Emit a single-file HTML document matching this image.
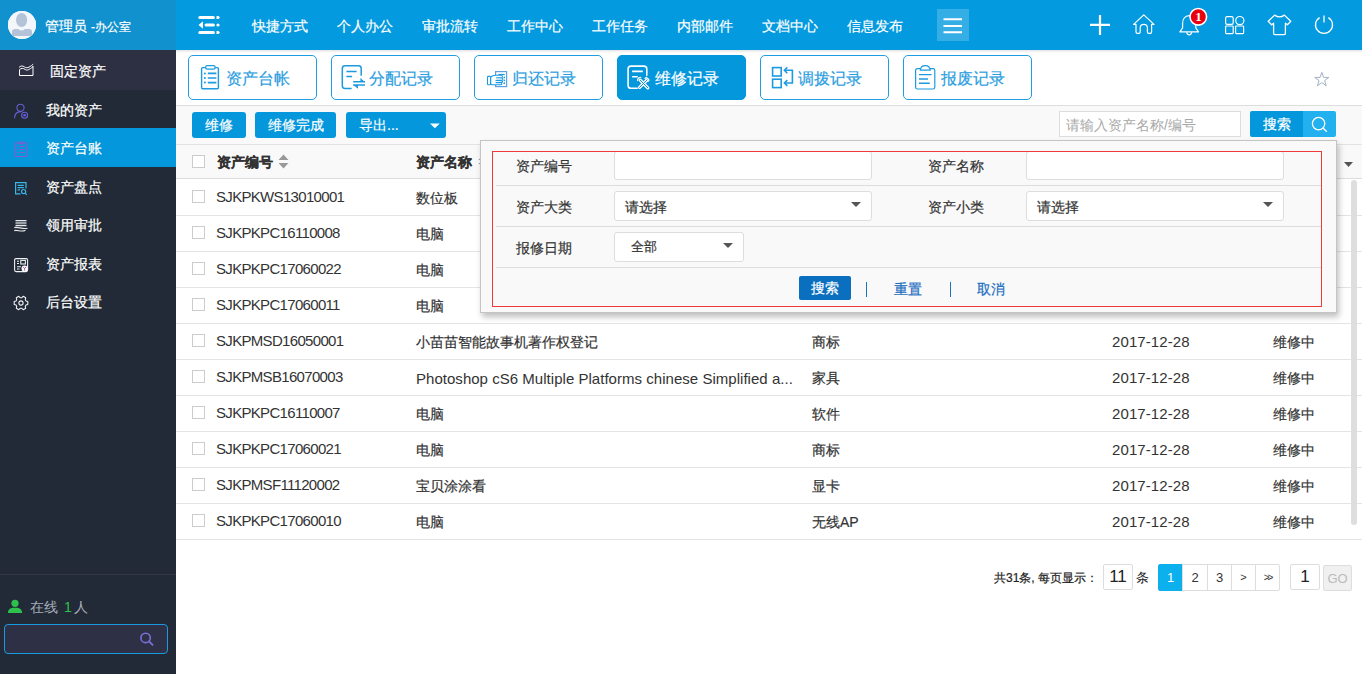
<!DOCTYPE html>
<html><head><meta charset="utf-8">
<style>
*{box-sizing:border-box;margin:0;padding:0}
html,body{width:1362px;height:674px;overflow:hidden;background:#fff;font-family:"Liberation Sans",sans-serif;font-size:14px;color:#333;-webkit-text-stroke:0.2px currentColor}
.nos{-webkit-text-stroke:0}
.a{position:absolute}
#side{left:0;top:0;width:176px;height:674px;background:#212a36}
#side .hd{left:0;top:0;width:176px;height:50px;background:#1191ce}
#side .av{left:8px;top:11px;width:28px;height:28px;border-radius:50%;background:#fff;overflow:hidden}
#side .uname{left:45px;top:17px;color:#fff;font-size:14px;line-height:18px;white-space:nowrap}
#side .fix{left:0;top:50px;width:176px;height:40px;background:#2d2f43}
.mi{left:0;width:176px;height:38px;color:#fff;line-height:38px}
.mi .t{position:absolute;left:46px;top:1px}
.mi.on{background:#0497dc}
#top{left:176px;top:0;width:1186px;height:50px;background:#039ae0;}
.nav{top:17px;color:#fff;font-size:14px;line-height:18px;white-space:nowrap}
#tabs{left:176px;top:50px;width:1186px;height:56px;background:#fff;border-bottom:1px solid #ddd}
.tab{top:55px;width:129px;height:45px;border:1px solid #1e9de0;border-radius:5px;color:#2c9ee0;font-size:16px;background:#fff}
.tab .t{position:absolute;left:37px;top:13px;line-height:20px;white-space:nowrap}
.tab.on{background:#0497dc;color:#fff;border-color:#0497dc}
#tool{left:176px;top:106px;width:1186px;height:38px;background:#f9f9f9}
.btn{height:26px;top:112px;background:#0497dc;color:#fff;border-radius:3px;font-size:14px;line-height:26px;text-align:center}
#thead{left:176px;top:144px;width:1186px;height:35px;background:#f9f9f9;border-top:1px solid #e3e3e3;border-bottom:1px solid #ddd}
.row{left:176px;width:1186px;height:36px;border-bottom:1px solid #e4e4e4;background:#fff}
.c.code{-webkit-text-stroke:0;top:-1px;left:40px;font-size:15px;letter-spacing:-0.68px}.nm{left:240px}.ct{left:636px}.c.dt{-webkit-text-stroke:0;top:0;left:936px;font-size:15px;letter-spacing:0.1px}.st{left:1097px}
.cb{position:absolute;left:16px;top:10px;width:13px;height:13px;border:1px solid #ccc;background:#fff}
.c{position:absolute;top:1px;line-height:35px;white-space:nowrap;color:#333}

.th{font-weight:bold;color:#333;line-height:18px;white-space:nowrap}
.pl{height:1px;background:#ddd}
.plab{color:#333;line-height:18px;white-space:nowrap}
.inp{background:#fff;border:1px solid #ddd;border-radius:3px}
.sel span{position:absolute;left:10px;top:6px;line-height:18px;color:#333;white-space:nowrap}
.sel i{position:absolute;left:236px;top:10px;width:0;height:0;border-left:5px solid transparent;border-right:5px solid transparent;border-top:5px solid #555}
.plk{top:280px;color:#1a6dc0;line-height:18px;white-space:nowrap}
.pbox{-webkit-text-stroke:0;border:1px solid #ddd;border-radius:2px;background:#fff;color:#222;text-align:center;line-height:24px}
.pg{-webkit-text-stroke:0;top:564px;height:27px;border:1px solid #ddd;background:#fff;color:#333;font-size:13px;line-height:25px;text-align:center}
</style></head><body>
<!-- SIDEBAR -->
<div id="side" class="a">
  <div class="hd a"></div>
  <div class="av a"></div>
  <div class="uname a">管理员 <span style="font-size:12px">-办公室</span></div>
  <div class="fix a"></div>
  <div class="a" style="left:50px;top:62px;color:#fff;line-height:18px">固定资产</div>
  <div class="mi a" style="top:90px"><span class="t">我的资产</span></div>
  <div class="mi a on" style="top:128px;height:39px"><span class="t">资产台账</span></div>
  <div class="mi a" style="top:167px"><span class="t">资产盘点</span></div>
  <div class="mi a" style="top:205px"><span class="t">领用审批</span></div>
  <div class="mi a" style="top:244px"><span class="t">资产报表</span></div>
  <div class="mi a" style="top:282px"><span class="t">后台设置</span></div>
</div>
<!-- TOP BAR -->
<div id="top" class="a"></div>
<div class="nav a" style="left:252px">快捷方式</div>
<div class="nav a" style="left:337px">个人办公</div>
<div class="nav a" style="left:422px">审批流转</div>
<div class="nav a" style="left:507px">工作中心</div>
<div class="nav a" style="left:592px">工作任务</div>
<div class="nav a" style="left:677px">内部邮件</div>
<div class="nav a" style="left:762px">文档中心</div>
<div class="nav a" style="left:847px">信息发布</div>
<!-- TABS -->
<div id="tabs" class="a"></div>
<div class="a" style="left:176px;top:50px;width:1186px;height:3px;background:linear-gradient(rgba(0,0,0,0.1),rgba(0,0,0,0))"></div>
<div class="tab a" style="left:188px"><span class="t">资产台帐</span></div>
<div class="tab a" style="left:331px"><span class="t">分配记录</span></div>
<div class="tab a" style="left:474px"><span class="t">归还记录</span></div>
<div class="tab a on" style="left:617px"><span class="t">维修记录</span></div>
<div class="tab a" style="left:760px"><span class="t">调拨记录</span></div>
<div class="tab a" style="left:903px"><span class="t">报废记录</span></div>
<!-- TOOLBAR -->
<div id="tool" class="a"></div>
<div class="btn a" style="left:192px;width:54px">维修</div>
<div class="btn a" style="left:255px;width:81px">维修完成</div>
<div class="btn a" style="left:346px;width:100px;text-align:left;padding-left:13px">导出...</div>
<!-- TABLE -->
<div id="thead" class="a"></div>
<div id="rows">
<div class="row a" style="top:180px"><span class="cb"></span><span class="c code">SJKPKWS13010001</span><span class="c nm">数位板</span></div>
<div class="row a" style="top:216px"><span class="cb"></span><span class="c code">SJKPKPC16110008</span><span class="c nm">电脑</span></div>
<div class="row a" style="top:252px"><span class="cb"></span><span class="c code">SJKPKPC17060022</span><span class="c nm">电脑</span></div>
<div class="row a" style="top:288px"><span class="cb"></span><span class="c code">SJKPKPC17060011</span><span class="c nm">电脑</span></div>
<div class="row a" style="top:324px"><span class="cb"></span><span class="c code">SJKPMSD16050001</span><span class="c nm">小苗苗智能故事机著作权登记</span><span class="c ct">商标</span><span class="c dt">2017-12-28</span><span class="c st">维修中</span></div>
<div class="row a" style="top:360px"><span class="cb"></span><span class="c code">SJKPMSB16070003</span><span class="c nm" style="-webkit-text-stroke:0;font-size:15px;letter-spacing:0.03px">Photoshop cS6 Multiple Platforms chinese Simplified a...</span><span class="c ct">家具</span><span class="c dt">2017-12-28</span><span class="c st">维修中</span></div>
<div class="row a" style="top:396px"><span class="cb"></span><span class="c code">SJKPKPC16110007</span><span class="c nm">电脑</span><span class="c ct">软件</span><span class="c dt">2017-12-28</span><span class="c st">维修中</span></div>
<div class="row a" style="top:432px"><span class="cb"></span><span class="c code">SJKPKPC17060021</span><span class="c nm">电脑</span><span class="c ct">商标</span><span class="c dt">2017-12-28</span><span class="c st">维修中</span></div>
<div class="row a" style="top:468px"><span class="cb"></span><span class="c code">SJKPMSF11120002</span><span class="c nm">宝贝涂涂看</span><span class="c ct">显卡</span><span class="c dt">2017-12-28</span><span class="c st">维修中</span></div>
<div class="row a" style="top:504px"><span class="cb"></span><span class="c code">SJKPKPC17060010</span><span class="c nm">电脑</span><span class="c ct">无线AP</span><span class="c dt">2017-12-28</span><span class="c st">维修中</span></div>
</div>
<!-- THEAD CONTENT -->
<span class="cb a" style="left:192px;top:155px"></span>
<div class="a th" style="left:217px;top:153px">资产编号</div>
<div class="a th" style="left:416px;top:153px">资产名称</div>
<svg class="a" style="left:278px;top:154px" width="11" height="15" viewBox="0 0 11 15"><path d="M5.5 0.5L10.5 6H0.5Z M5.5 14.5L10.5 9H0.5Z" fill="#999"/></svg>
<svg class="a" style="left:478px;top:154px" width="11" height="15" viewBox="0 0 11 15"><path d="M5.5 0.5L10.5 6H0.5Z M5.5 14.5L10.5 9H0.5Z" fill="#999"/></svg>
<svg class="a" style="left:1343.5px;top:162px" width="9" height="5" viewBox="0 0 9 5"><path d="M0 0H9L4.5 5Z" fill="#555"/></svg>
<!-- SCROLLBAR -->
<div class="a" style="left:1351px;top:180px;width:6px;height:345px;border-radius:3px;background:#dedede"></div>
<!-- SEARCH -->
<div class="a" style="left:1059px;top:111px;width:182px;height:26px;border:1px solid #ddd;background:#fff;color:#a8a8a8;font-size:14px;line-height:27px;padding-left:6px;-webkit-text-stroke:0;white-space:nowrap">请输入资产名称/编号</div>
<div class="a" style="left:1250px;top:111px;width:54px;height:26px;background:#0497dc;color:#fff;line-height:26px;text-align:center;border-radius:2px 0 0 2px">搜索</div>
<div class="a" style="left:1303px;top:111px;width:33px;height:26px;background:#22b0ef;border-radius:0 2px 2px 0"></div>
<svg class="a" style="left:0;top:0;z-index:5" width="1362" height="674" viewBox="0 0 1362 674">
<!-- avatar -->
<defs><clipPath id="avc"><circle cx="22" cy="25" r="14"/></clipPath></defs>
<circle cx="22" cy="25" r="14" fill="#f3f7fb"/>
<g clip-path="url(#avc)" fill="#b5c3d8">
<ellipse cx="21.6" cy="20" rx="5.6" ry="7"/>
<path d="M12 36 V31.8 Q12 29 15 29 H18.3 Q21.6 32 24.9 29 H29 Q32 29 32 31.8 V36Z"/>
</g>
<!-- fixed asset icon -->
<g fill="none" stroke="#fff" stroke-width="1">
<path d="M19.5 69.6 V75.5 H33 V66"/>
<path d="M19 67.4 C20.8 65.6, 22.6 65.6, 24.6 67 S28.6 68, 33.2 64.2"/>
<path d="M19.5 69.6 C21.3 68, 23.1 68, 25.1 69.4 S29 70, 33 66.6"/>
</g>
<!-- my assets -->
<g fill="none" stroke="#6a5fd8" stroke-width="1.1">
<circle cx="20.5" cy="107.8" r="3.6"/>
<path d="M14.6 118.2 Q14.6 111.6 21 111.6"/>
<circle cx="24.6" cy="115.2" r="3"/>
</g>
<circle cx="24.6" cy="115.2" r="1.3" fill="#6a5fd8"/>
<!-- asset ledger (active) -->
<g fill="none" stroke="#8b58cf" stroke-width="1">
<rect x="15.5" y="143" width="11" height="13.5"/>
<rect x="18.5" y="142" width="5" height="2" rx="1"/>
<path d="M19.5 146.5 H24.5 M19.5 149.5 H24.5 M19.5 152.5 H24.5" stroke-width="1.2"/>
<path d="M17 146.5 H18 M17 149.5 H18 M17 152.5 H18" stroke-width="1.2"/>
</g>
<!-- inventory -->
<g fill="none" stroke="#3ab6e8" stroke-width="1.2">
<path d="M20.5 193.8 H15.6 V182.6 H26 V188.5"/>
<path d="M17.6 185.3 H23.8 M17.6 187.6 H23.8 M17.6 189.9 H20"/>
<circle cx="23.6" cy="191.6" r="2.1"/>
<path d="M25.2 193.2 L26.8 194.8"/>
</g>
<!-- approval -->
<g fill="none" stroke="#e6e8ea" stroke-width="1.1">
<path d="M15.5 220.6 H26.5 M15.5 225.6 H26.5"/>
<path d="M15.5 223.1 H26.5" stroke="#9aa0a8" stroke-width="2.5"/>
<path d="M14.3 227.6 C18 226.5, 22 229.5, 27.5 228.3"/>
<path d="M14.3 230.6 C18 229.6, 21.5 232.6, 25.5 230.2"/>
</g>
<!-- report -->
<g fill="none" stroke="#eef0f2" stroke-width="1.1">
<rect x="14.6" y="258.6" width="13" height="13" rx="1.5"/>
<path d="M17 261.3 H19 M17 263.5 H19 M17 266.8 H21 M17 269 H19.5"/>
<rect x="20.8" y="260.4" width="4.6" height="3.6"/>
</g>
<circle cx="24.6" cy="268.6" r="3.1" fill="#fff"/>
<path d="M23.2 266.8 L24.6 268.6 L26 266.8 M24.6 268.6 V270.6" stroke="#8b3fa8" stroke-width="0.8" fill="none"/>
<!-- gear -->
<path d="M27.8 301.5 L27.8 304.5 L26.0 305.0 L25.3 306.3 L25.7 308.2 L23.2 309.7 L21.8 308.3 L20.2 308.3 L18.8 309.7 L16.3 308.2 L16.7 306.3 L16.0 305.0 L14.2 304.5 L14.2 301.5 L16.0 301.0 L16.7 299.7 L16.3 297.8 L18.8 296.3 L20.2 297.7 L21.8 297.7 L23.2 296.3 L25.7 297.8 L25.3 299.7 L26.0 301.0Z" fill="none" stroke="#f0f2f4" stroke-width="1.1" stroke-linejoin="round"/>
<circle cx="21" cy="303" r="2.1" fill="none" stroke="#f0f2f4" stroke-width="1.1"/>
<!-- online icon -->
<circle cx="15" cy="603.3" r="3.6" fill="#2ec14e"/>
<path d="M7.8 613 Q8.3 608 12.8 607.8 H17.2 Q21.7 608 22.2 613Z" fill="#2ec14e"/>
<!-- sidebar search magnifier -->
<circle cx="145.6" cy="637.9" r="4.7" fill="none" stroke="#7b6fd8" stroke-width="1.6"/>
<path d="M149 641.3 L152.6 644.9" stroke="#7b6fd8" stroke-width="1.8" stroke-linecap="round"/>
<!-- top collapse icon -->
<g fill="#fff">
<rect x="198.3" y="15.9" width="16.6" height="3" rx="1.5"/>
<rect x="204.5" y="23.5" width="10.4" height="3" rx="1.5"/>
<rect x="198.3" y="31.1" width="16.6" height="3" rx="1.5"/>
<path d="M216.5 15.9 H218.5 L220 17.4 L218.5 18.9 H216.5Z"/>
<circle cx="218" cy="25" r="1.6"/>
<path d="M216.5 31.1 H218.5 L220 32.6 L218.5 34.1 H216.5Z"/>
<path d="M198.5 25 L203 21.2 V28.8Z"/>
</g>
<!-- menu button -->
<rect x="937" y="9" width="32" height="32" fill="#fff" fill-opacity="0.2"/>
<path d="M943.5 19.3 H962 M943.5 26 H962 M943.5 32.2 H962" stroke="#fff" stroke-width="2"/>
<!-- plus -->
<path d="M1090 24.9 H1110 M1100 15 V35" stroke="#fff" stroke-width="2.2"/>
<!-- home -->
<path d="M1133.6 24.4 L1143.8 14.9 L1154 24.4 H1151.6 V32 Q1151.6 33.4 1150.2 33.4 H1148.8 Q1147.4 33.4 1147.4 32 V28 Q1147.4 24.3 1143.8 24.3 Q1140.2 24.3 1140.2 28 V32 Q1140.2 33.4 1138.8 33.4 H1137.4 Q1136 33.4 1136 32 V24.4Z" fill="none" stroke="#fff" stroke-width="1.2" stroke-linejoin="round"/>
<!-- bell -->
<path d="M1189.2 15.6 C1184.6 15.6 1182.6 19.5 1182.6 23.8 V27.8 L1179.9 31.9 H1198.5 L1195.8 27.8 V23.8 C1195.8 19.5 1193.8 15.6 1189.2 15.6Z" fill="none" stroke="#fff" stroke-width="1.2" stroke-linejoin="round"/>
<path d="M1186.8 32.2 Q1187 34.8 1189.2 34.8 Q1191.4 34.8 1191.6 32.2" fill="none" stroke="#fff" stroke-width="1.2"/>
<circle cx="1198.3" cy="16.8" r="8.3" fill="#e8000e" stroke="#fff" stroke-width="1.6"/>
<text x="1198.4" y="21.4" fill="#fff" font-family="Liberation Serif" font-size="13" font-weight="bold" text-anchor="middle">1</text>
<!-- apps -->
<g fill="none" stroke="#fff" stroke-width="1.2">
<rect x="1225.6" y="16.6" width="7.6" height="7.8" rx="1.6"/>
<circle cx="1239.8" cy="20.6" r="4.1"/>
<rect x="1225.6" y="26" width="7.6" height="7.6" rx="0.8"/>
<rect x="1235.6" y="26" width="8" height="7.6" rx="0.8"/>
</g>
<!-- shirt -->
<path d="M1274.6 15.1 L1268.2 21.3 L1271.6 24.8 L1273.6 23.2 V33.5 Q1273.6 34.6 1274.7 34.6 H1284.3 Q1285.4 34.6 1285.4 33.5 V23.2 L1287.4 24.8 L1290.8 21.3 L1284.4 15.1 Q1279.5 18.6 1274.6 15.1Z" fill="none" stroke="#fff" stroke-width="1.3" stroke-linejoin="round"/>
<!-- power -->
<path d="M1319.6 17.6 A8.5 8.5 0 1 0 1328.4 17.6" fill="none" stroke="#fff" stroke-width="1.3"/>
<path d="M1324 15.6 V22.6" stroke="#fff" stroke-width="1.3"/>
<!-- tab1 clipboard -->
<g fill="none" stroke="#1e9ae0">
<rect x="201.6" y="67.6" width="16.8" height="21.2" rx="1" stroke-width="1.4"/>
<rect x="205.6" y="65.6" width="9.6" height="3.6" rx="1.8" fill="#fff" stroke-width="1.3"/>
<path d="M207.8 73.4 H216.4 M207.8 78 H216.4 M207.8 82.6 H216.4" stroke-width="1.6"/>
</g>
<g fill="#1e9ae0"><circle cx="204.9" cy="73.4" r="1"/><circle cx="204.9" cy="78" r="1"/><circle cx="204.9" cy="82.6" r="1"/></g>
<!-- tab2 -->
<g fill="none" stroke="#1e9ae0" stroke-width="1.5">
<path d="M351.6 88.4 H345 Q342.3 88.4 342.3 85.7 V68.5 Q342.3 65.8 345 65.8 H358.5 Q361.2 65.8 361.2 68.5 V75.8"/>
<path d="M346.4 71.4 H356.6 M346.4 76.6 H352"/>
<path d="M353.2 81.8 H365 M353.2 85 H365"/>
</g>
<path d="M360.4 78 L364.6 81.8 H360.4Z M353.4 85 H358 L358 88.8Z" fill="#1e9ae0"/>
<!-- tab3 hand -->
<rect x="495.6" y="71.6" width="11" height="15" fill="#fff" stroke="#5f9fe2" stroke-width="1.2"/>
<path d="M498.4 74.5 H504.8" stroke="#1e9ae0" stroke-width="1.2"/>
<g fill="#1e9ae0"><circle cx="504.3" cy="77.4" r="0.85"/><circle cx="504.3" cy="80.3" r="0.85"/><circle cx="504.3" cy="83.2" r="0.85"/></g>
<g fill="#fff" stroke="#1e9ae0" stroke-width="1.1" stroke-linejoin="round">
<path d="M490.6 77 Q492.6 75.2 495.4 75.2 H501.2 Q502.4 75.2 502.4 76.4 Q502.4 77.8 501.2 77.8 H496.5 L501.6 78 Q502.8 78 502.8 79.2 Q502.8 80.4 501.6 80.4 H496 L501.4 80.6 Q502.6 80.6 502.6 81.6 Q502.6 82.6 501.4 82.6 H496 L500.8 82.8 Q501.8 82.8 501.8 83.8 Q501.8 84.8 500.8 84.8 H494 Q492 84.8 490.6 84.2Z"/>
<rect x="487.5" y="76.4" width="3.1" height="8.4" rx="0.9"/>
</g>
<!-- tab4 (white) -->
<g fill="none" stroke="#fff" stroke-width="1.6">
<path d="M637.8 88.3 H631 Q628.1 88.3 628.1 85.4 V69 Q628.1 66.1 631 66.1 H643.9 Q646.8 66.1 646.8 69 V75.8"/>
<path d="M632.1 71.4 H642.8 M632.1 76.7 H637.8"/>
</g>
<g stroke-linecap="round" fill="none">
<path d="M640.2 80.2 L647.8 87.8 M647.4 79.6 L639.6 87.4" stroke="#fff" stroke-width="3.2"/>
<path d="M640.2 80.2 L647.8 87.8 M647.4 79.6 L639.6 87.4" stroke="#0497dc" stroke-width="1"/>
<path d="M637.6 80.6 Q637.6 77.4 640.8 77.4" stroke="#fff" stroke-width="1.2"/>
<path d="M645 78.4 L646.4 77.4 L649 80 L648 81.4" stroke="#fff" stroke-width="1.2"/>
</g>
<!-- tab5 -->
<g fill="none" stroke="#1e9ae0" stroke-width="1.6">
<rect x="772.6" y="67.6" width="8.6" height="8.4"/>
<rect x="772.6" y="79.2" width="8.6" height="8.4"/>
<path d="M784.6 70.3 H792.4 V83 H784.6"/>
<path d="M787.3 67.4 L784.4 70.3 L787.3 73.2 M787.3 80.1 L784.4 83 L787.3 85.9"/>
</g>
<!-- tab6 clipboard -->
<g fill="none" stroke="#1e9ae0" stroke-width="1.2">
<path d="M920.6 68.6 H917.4 Q915.6 68.6 915.6 70.4 V87.2 Q915.6 89 917.4 89 H933 Q934.8 89 934.8 87.2 V70.4 Q934.8 68.6 933 68.6 H930"/>
<path d="M920.4 70.2 Q920.6 65.6 925.3 65.6 Q930 65.6 930.2 70.2Z"/>
<path d="M919 74.6 H931.6 M919 79 H928 M919 83.2 H929.8" stroke-width="1.4"/>
</g>
<!-- star -->
<path d="M1321.8 72.4 L1323.6 77.4 H1328.9 L1324.6 80.6 L1326.2 85.8 L1321.8 82.6 L1317.4 85.8 L1319 80.6 L1314.7 77.4 H1320Z" fill="none" stroke="#a3b1c2" stroke-width="1"/>
<!-- export caret -->
<path d="M430 123.4 H439.8 L434.9 128.2Z" fill="#fff"/>
<!-- search magnifier -->
<circle cx="1318.6" cy="123.6" r="6.2" fill="none" stroke="#fff" stroke-width="1.3"/>
<path d="M1323 128 L1326.8 131.8" stroke="#fff" stroke-width="1.3"/>
</svg>
<!-- POPUP -->
<div class="a" id="pop" style="left:480px;top:140px;width:857px;height:173px;background:#f9f9f9;border:1px solid #c4c4c4;box-shadow:2px 4px 6px rgba(0,0,0,0.25)"></div>
<div class="a pl" style="left:496px;top:185px;width:826px"></div>
<div class="a pl" style="left:496px;top:226px;width:826px"></div>
<div class="a pl" style="left:496px;top:267px;width:826px"></div>
<div class="a plab" style="left:516px;top:157px">资产编号</div>
<div class="a plab" style="left:928px;top:157px">资产名称</div>
<div class="a plab" style="left:516px;top:198px">资产大类</div>
<div class="a plab" style="left:928px;top:198px">资产小类</div>
<div class="a plab" style="left:516px;top:239px">报修日期</div>
<div class="a inp" style="left:614px;top:151px;width:258px;height:29px"></div>
<div class="a inp" style="left:1026px;top:151px;width:258px;height:29px"></div>
<div class="a inp sel" style="left:614px;top:191px;width:258px;height:30px"><span>请选择</span><i></i></div>
<div class="a inp sel" style="left:1026px;top:191px;width:258px;height:30px"><span>请选择</span><i></i></div>
<div class="a inp sel" style="left:614px;top:232px;width:130px;height:30px"><span style="left:16px;top:5px;font-size:13px">全部</span><i style="left:108px"></i></div>
<div class="a" style="left:492px;top:151px;width:830px;height:156px;border:1px solid #f03a3a"></div>
<div class="a" style="left:799px;top:276px;width:52px;height:24px;background:#0b6fc0;color:#fff;text-align:center;line-height:24px;border-radius:2px">搜索</div>
<div class="a" style="left:866px;top:282px;width:1px;height:15px;background:#1d70c0"></div>
<div class="a plk" style="left:894px">重置</div>
<div class="a" style="left:950px;top:282px;width:1px;height:15px;background:#1d70c0"></div>
<div class="a plk" style="left:977px">取消</div>
<!-- PAGINATION -->
<div class="a" style="left:994px;top:570px;font-size:12px;line-height:16px;color:#222;white-space:nowrap">共31条, 每页显示：</div>
<div class="a pbox" style="left:1103px;top:564px;width:30px;height:26px;font-size:17px">11</div>
<div class="a" style="left:1136px;top:570px;font-size:13px;line-height:16px;color:#222;-webkit-text-stroke:0">条</div>
<div class="a pg" style="left:1158px;width:25px;background:#0cb0ec;border-color:#0cb0ec;color:#fff;border-radius:2px 0 0 2px">1</div>
<div class="a pg" style="left:1182px;width:26px">2</div>
<div class="a pg" style="left:1207px;width:25px">3</div>
<div class="a pg" style="left:1231px;width:25px;font-size:11px">&gt;</div>
<div class="a pg" style="left:1255px;width:25px;font-size:10px;letter-spacing:-2px;border-radius:0 2px 2px 0">&gt;&gt;</div>
<div class="a pbox" style="left:1290px;top:564px;width:30px;height:26px;font-size:17px">1</div>
<div class="a" style="left:1323px;top:565px;width:29px;height:26px;background:#f0f0f0;border:1px solid #ddd;border-radius:2px;color:#bbb;font-size:13px;line-height:25px;text-align:center;-webkit-text-stroke:0">GO</div>
<!-- SIDEBAR BOTTOM -->
<div class="a" style="left:0;top:574px;width:176px;height:1px;background:#333747"></div>
<div class="a" style="left:30px;top:598px;color:#a4adb8;font-size:14px;line-height:18px;white-space:nowrap;-webkit-text-stroke:0">在线</div><div class="a" style="left:64px;top:598px;color:#2ec14e;font-size:14px;line-height:18px;-webkit-text-stroke:0">1</div><div class="a" style="left:74px;top:598px;color:#a4adb8;font-size:14px;line-height:18px;-webkit-text-stroke:0">人</div>
<div class="a" style="left:4px;top:624px;width:164px;height:30px;border:1px solid #1a9ae0;border-radius:4px;background:#2e3046"></div>
</body></html>
